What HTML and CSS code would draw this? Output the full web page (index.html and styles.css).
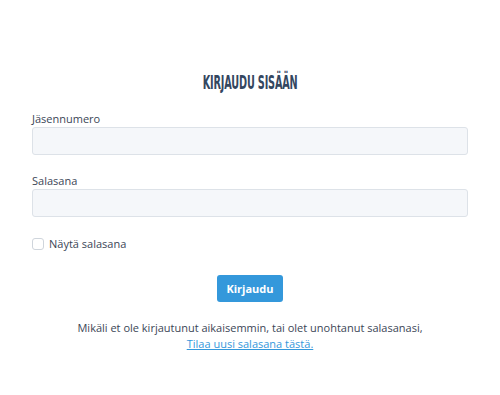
FILE: index.html
```html
<!DOCTYPE html>
<html lang="fi">
<head>
<meta charset="utf-8">
<title>Kirjaudu sisään</title>
<link rel="stylesheet" href="styles.css">
</head>
<body>
<main class="login">
  <h1 class="login-title"><span>Kirjaudu sisään</span></h1>
  <form class="login-form">
    <div class="field">
      <label class="field-label" for="member">Jäsennumero</label>
      <input class="field-input" id="member" type="text">
    </div>
    <div class="field">
      <label class="field-label" for="pass">Salasana</label>
      <input class="field-input" id="pass" type="password">
    </div>
    <label class="check">
      <span class="check-box"></span>
      <span class="check-text">Näytä salasana</span>
    </label>
    <div class="actions">
      <button class="btn" type="button">Kirjaudu</button>
    </div>
    <p class="note">Mikäli et ole kirjautunut aikaisemmin, tai olet unohtanut salasanasi,<br><a class="note-link" href="#">Tilaa uusi salasana tästä.</a></p>
  </form>
</main>
</body>
</html>
```
FILE: styles.css
```css
html, body {
  margin: 0;
  padding: 0;
  background: #ffffff;
}
body {
  font-family: "Open Sans", "Noto Sans", sans-serif;
  font-size: 11px;
  color: #3b4656;
}
.login {
  width: 436px;
  margin: 0 auto;
  padding-top: 73px;
}
.login-title {
  margin: 0 0 18px;
  text-align: center;
  font-family: "DejaVu Sans Condensed", "DejaVu Sans", sans-serif;
  font-weight: bold;
  font-size: 13px;
  line-height: 20px;
  text-transform: uppercase;
  color: #34475f;
  letter-spacing: -0.2px;
}
.login-title span {
  display: inline-block;
  transform: scale(0.83, 1.55);
}
.field {
  display: flex;
  flex-direction: column;
  margin-bottom: 18px;
}
.field-label {
  line-height: 15px;
  margin-bottom: 1px;
}
.field-input {
  box-sizing: border-box;
  height: 28px;
  width: 100%;
  margin: 0;
  border: 1px solid #dde2e8;
  border-radius: 3px;
  background: #f5f7fa;
  font: inherit;
}
.check {
  display: flex;
  align-items: center;
  gap: 5px;
  margin-top: 0;
  height: 18px;
}
.check-box {
  box-sizing: border-box;
  width: 12px;
  height: 12px;
  border: 1px solid #cfd5dc;
  border-radius: 3px;
  background: #fff;
}
.check-text {
  line-height: 18px;
}
.actions {
  display: flex;
  justify-content: center;
  margin-top: 22px;
}
.btn {
  height: 27px;
  padding: 0 9px;
  border: 0;
  border-radius: 3px;
  background: #3498db;
  color: #ffffff;
  font-family: "Open Sans", "Noto Sans", sans-serif;
  font-weight: bold;
  font-size: 11px;
}
.note {
  margin: 18px 0 0;
  text-align: center;
  line-height: 16px;
}
.note-link {
  color: #3498db;
  text-decoration: underline;
}
```
